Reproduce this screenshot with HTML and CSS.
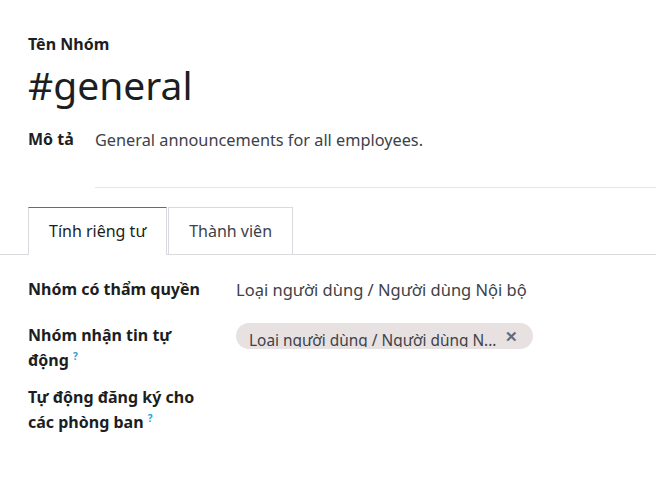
FILE: index.html
```html
<!DOCTYPE html>
<html lang="vi">
<head>
    <meta charset="UTF-8">
    <meta name="viewport" content="width=device-width, initial-scale=1.0">
    <title>#general</title>
    <link rel="stylesheet" href="styles.css">
</head>
<body>

<div class="sheet">
    <div class="title-block">
        <label class="title-label">Tên Nhóm</label>
        <h1 class="title">#general</h1>
    </div>

    <div class="desc-row">
        <label class="desc-label">Mô tả</label>
        <div class="desc-field">General announcements for all employees.</div>
    </div>
</div>

<div class="tabs">
    <div class="tab active">Tính riêng tư</div>
    <div class="tab">Thành viên</div>
</div>

<div class="fields">
    <div class="field-label">Nhóm có thẩm quyền</div>
    <div class="field-value first">Loại người dùng / Người dùng Nội bộ</div>

    <div class="field-label">Nhóm nhận tin tự động <sup class="help">?</sup></div>
    <div class="field-value">
        <span class="tag">
            <span class="tag-text">Loai người dùng / Người dùng N...</span>
            <span class="tag-close">&#x2715;</span>
        </span>
    </div>

    <div class="field-label">Tự động đăng ký cho các phòng ban <sup class="help">?</sup></div>
    <div class="field-value"></div>
</div>

</body>
</html>
```

FILE: styles.css
```css
body {
    margin: 0;
    font-family: "Noto Sans", "Open Sans", sans-serif;
    color: #1b1e22;
    background-color: #fff;
}

.sheet {
    padding: 33px 0 0 28px;
}

.title-label {
    display: block;
    font-size: 16px;
    font-weight: bold;
    line-height: 22px;
}

.title {
    margin: 3px 0 0 0;
    font-size: 39px;
    font-weight: normal;
    line-height: 54px;
}

.desc-row {
    display: flex;
    margin-top: 16px;
}

.desc-label {
    width: 67px;
    flex-shrink: 0;
    font-size: 16px;
    font-weight: bold;
    line-height: 22px;
}

.desc-field {
    flex: 1;
    font-size: 16.3px;
    line-height: 24px;
    color: #3d4148;
    padding-bottom: 35px;
    border-bottom: 1px solid #e6e6e6;
}

.tabs {
    display: flex;
    margin-top: 19px;
    padding-left: 28px;
    border-bottom: 1px solid #d8dadd;
}

.tab {
    padding: 11px 20px;
    font-size: 16px;
    line-height: 24px;
    color: #3d4148;
    border: 1px solid #d8dadd;
    border-bottom: none;
    margin-bottom: -1px;
}

.tab + .tab {
    margin-left: 1px;
}

.tab.active {
    background-color: #fff;
    color: #1b1e22;
    border-top-color: #3a6fd8;
    padding-bottom: 12px;
}

.fields {
    display: grid;
    grid-template-columns: 208px 1fr;
    row-gap: 12px;
    padding: 22px 0 0 28px;
}

.field-label {
    font-size: 16px;
    font-weight: bold;
    line-height: 25px;
    width: 180px;
}

.field-value {
    font-size: 16.5px;
    line-height: 25px;
    color: #3d4148;
}

.field-value.first {
    min-height: 34px;
}

.help {
    font-size: 10px;
    font-weight: bold;
    vertical-align: 6px;
    line-height: 10px;
    color: #2a9fc6;
}

.tag {
    display: inline-flex;
    align-items: center;
    height: 26px;
    padding: 0 15px 0 13px;
    border-radius: 13px;
    background-color: #e7e1e1;
    overflow: hidden;
}

.tag-text {
    font-size: 15.4px;
    line-height: 30px;
    height: 21px;
    overflow: hidden;
    color: #3d4148;
}

.tag-close {
    margin-left: 9px;
    font-size: 15px;
    font-weight: bold;
    line-height: 16px;
    color: #66696e;
}
```
